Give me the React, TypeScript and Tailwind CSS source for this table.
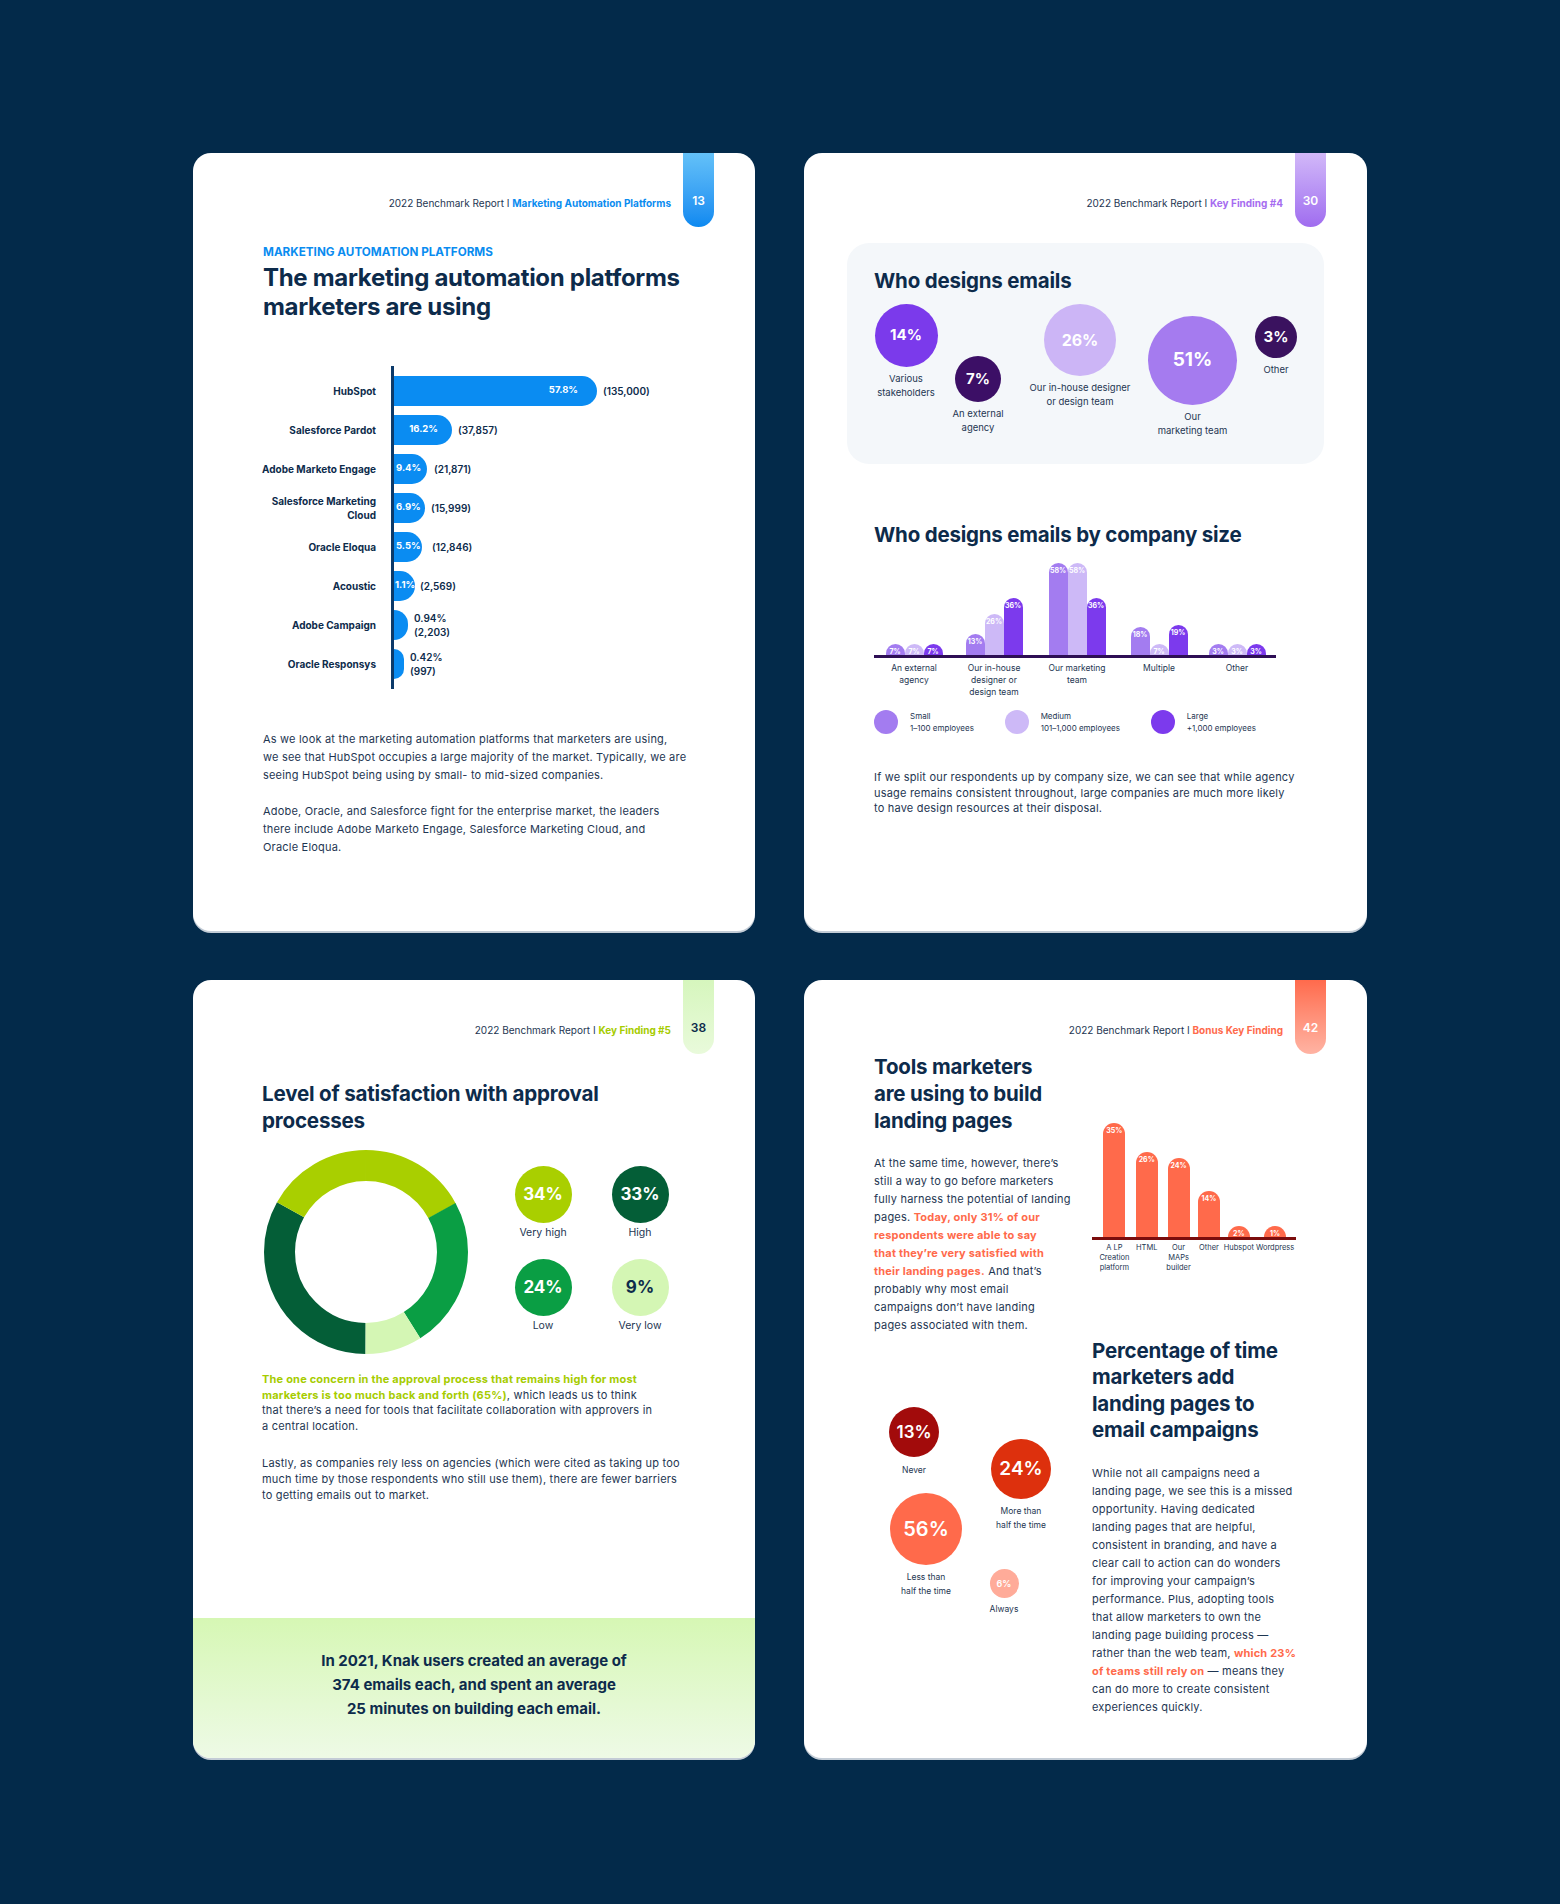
import React from 'react'

type HeaderProps = { section: string; sectionClass: string; num: string; tabClass: string }

function PageHeader({ section, sectionClass, num, tabClass }: HeaderProps) {
  return (
    <div className="flex justify-end pr-[41px]">
      <div className="mt-[42px] mr-[12px] whitespace-nowrap text-[10px] leading-[16px] text-[#1e3652]">
        2022 Benchmark Report I <span className={`font-bold ${sectionClass}`}>{section}</span>
      </div>
      <div
        className={`flex h-[74px] w-[31px] justify-center rounded-b-full pt-[40px] text-[12px] font-semibold leading-[16px] ${tabClass}`}
      >
        {num}
      </div>
    </div>
  )
}

const cardClass = 'flex h-[778px] flex-col overflow-hidden rounded-[18px] bg-white shadow-[0_2px_0_0_#c3ccd6]'

// card 1 data
const platforms = [
  { label: ['HubSpot'], w: 203, pct: '57.8%', val: ['(135,000)'], inner: 'justify-end pr-[19px]', gap: 'ml-[6px]' },
  { label: ['Salesforce Pardot'], w: 58, pct: '16.2%', val: ['(37,857)'], inner: 'justify-end pr-[14px]', gap: 'ml-[6px]' },
  { label: ['Adobe Marketo Engage'], w: 33, pct: '9.4%', val: ['(21,871)'], inner: 'justify-start pl-[2px]', gap: 'ml-[7px]' },
  { label: ['Salesforce Marketing', 'Cloud'], w: 31, pct: '6.9%', val: ['(15,999)'], inner: 'justify-start pl-[2px]', gap: 'ml-[6px]' },
  { label: ['Oracle Eloqua'], w: 28, pct: '5.5%', val: ['(12,846)'], inner: 'justify-start pl-[2px]', gap: 'ml-[10px]' },
  { label: ['Acoustic'], w: 21, pct: '1.1%', val: ['(2,569)'], inner: 'justify-start pl-[1px]', gap: 'ml-[5px]' },
  { label: ['Adobe Campaign'], w: 14, pct: '', val: ['0.94%', '(2,203)'], inner: '', gap: 'ml-[6px]' },
  { label: ['Oracle Responsys'], w: 10, pct: '', val: ['0.42%', '(997)'], inner: '', gap: 'ml-[6px]' },
]

function PlatformsCard() {
  return (
    <div className={cardClass}>
      <PageHeader
        section="Marketing Automation Platforms"
        sectionClass="text-[#0a8cf0]"
        num="13"
        tabClass="bg-linear-to-b from-[#63c1f8] to-[#0a89f0] text-white"
      />
      <div className="px-[70px]">
        <div className="mt-[17px] text-[11.7px] font-bold leading-[16px] text-[#0a8cf0]">MARKETING AUTOMATION PLATFORMS</div>
        <h2 className="mt-[4px] text-[24px] font-bold leading-[28.5px] tracking-[-0.3px] text-[#0d2b4b]">
          The marketing automation platforms
          <br />
          marketers are using
        </h2>
        <div className="mt-[45px] flex">
          <div className="w-[113px] pt-[5px] pb-[6px]">
            {platforms.map((p) => (
              <div
                key={p.label[0]}
                className="flex h-[39px] flex-col items-end justify-center text-right text-[10px] font-bold leading-[14px] text-[#0d2b4b]"
              >
                {p.label.map((l) => (
                  <span key={l} className="whitespace-nowrap">
                    {l}
                  </span>
                ))}
              </div>
            ))}
          </div>
          <div className="ml-[15px] border-l-[3.5px] border-[#0c3a6a] pt-[5px] pb-[6px]">
            {platforms.map((p) => (
              <div key={p.label[0]} className="flex h-[39px] items-center">
                <div
                  className={`flex h-[30px] items-center whitespace-nowrap rounded-r-full bg-[#0a8cf2] text-[9.5px] font-bold text-white ${p.inner}`}
                  style={{ width: p.w }}
                >
                  {p.pct}
                </div>
                <div className={`flex flex-col text-[10px] font-semibold leading-[14px] text-[#0d2b4b] ${p.gap}`}>
                  {p.val.map((v) => (
                    <span key={v}>{v}</span>
                  ))}
                </div>
              </div>
            ))}
          </div>
        </div>
        <div className="mt-[41px] whitespace-nowrap text-[11px] leading-[18px] tracking-[0.2px] text-[#1e3652]">
          <p>
            As we look at the marketing automation platforms that marketers are using,
            <br />
            we see that HubSpot occupies a large majority of the market. Typically, we are
            <br />
            seeing HubSpot being using by small- to mid-sized companies.
          </p>
          <p className="mt-[18px]">
            Adobe, Oracle, and Salesforce fight for the enterprise market, the leaders
            <br />
            there include Adobe Marketo Engage, Salesforce Marketing Cloud, and
            <br />
            Oracle Eloqua.
          </p>
        </div>
      </div>
    </div>
  )
}

// card 2 data
const bubbles = [
  { pct: '14%', size: 'h-[63px] w-[63px] text-[15px]', color: 'bg-[#7b3aeb]', col: 'w-[64px] ml-0 mt-0', label: ['Various', 'stakeholders'] },
  { pct: '7%', size: 'h-[46px] w-[46px] text-[15px]', color: 'bg-[#3c0f66]', col: 'w-[60px] ml-[10px] mt-[52px]', label: ['An external', 'agency'] },
  { pct: '26%', size: 'h-[72px] w-[72px] text-[16px]', color: 'bg-[#ccb5f6]', col: 'w-[104px] ml-[20px] mt-0', label: ['Our in-house designer', 'or design team'] },
  { pct: '51%', size: 'h-[89px] w-[89px] text-[19px]', color: 'bg-[#a57bef]', col: 'w-[89px] ml-[16px] mt-[12px]', label: ['Our', 'marketing team'] },
  { pct: '3%', size: 'h-[42px] w-[42px] text-[15px]', color: 'bg-[#3a125f]', col: 'w-[42px] ml-[18px] mt-[12px]', label: ['Other'] },
]

const sizeColors = ['bg-[#a37cf0]', 'bg-[#cdb9f7]', 'bg-[#7c3aed]']

const sizeGroups = [
  { label: ['An external', 'agency'], w: 'w-[80px]', vals: [7, 7, 7] },
  { label: ['Our in-house', 'designer or', 'design team'], w: 'w-[80px]', vals: [13, 26, 36] },
  { label: ['Our marketing', 'team'], w: 'w-[86px]', vals: [58, 58, 36] },
  { label: ['Multiple'], w: 'w-[78px]', vals: [18, 7, 19] },
  { label: ['Other'], w: 'w-[78px]', vals: [3, 3, 3] },
]

const legend = [
  { color: 'bg-[#a37cf0]', name: 'Small', range: '1–100 employees', w: 'w-[143px]' },
  { color: 'bg-[#cdb9f7]', name: 'Medium', range: '101–1,000 employees', w: 'w-[160px]' },
  { color: 'bg-[#7c3aed]', name: 'Large', range: '+1,000 employees', w: 'w-[160px]' },
]

function DesignersCard() {
  return (
    <div className={cardClass}>
      <PageHeader
        section="Key Finding #4"
        sectionClass="text-[#a66cf0]"
        num="30"
        tabClass="bg-linear-to-b from-[#d2b8f8] to-[#a06cef] text-white"
      />
      <div className="mx-[43px] mt-[16px] h-[221px] rounded-[22px] bg-[#f4f7fa] pl-[27px] pt-[26px]">
        <h2 className="text-[20.5px] font-bold leading-[24px] tracking-[-0.2px] text-[#0d2b4b]">Who designs emails</h2>
        <div className="mt-[11px] flex items-start">
          {bubbles.map((b) => (
            <div key={b.pct} className={`flex flex-col items-center ${b.col}`}>
              <div className={`flex items-center justify-center rounded-full font-bold text-white ${b.size} ${b.color}`}>
                {b.pct}
              </div>
              <div className="mt-[5px] text-center text-[9.5px] leading-[14px] whitespace-nowrap text-[#1e3652]">
                {b.label.map((l) => (
                  <div key={l}>{l}</div>
                ))}
              </div>
            </div>
          ))}
        </div>
      </div>
      <div className="px-[70px]">
        <h2 className="mt-[59px] text-[20.5px] font-bold leading-[24px] tracking-[-0.2px] text-[#0d2b4b]">
          Who designs emails by company size
        </h2>
        <div className="mt-[16px] w-[402px]">
          <div className="flex h-[92px] items-end">
            {sizeGroups.map((g) => (
              <div key={g.label[0]} className={`flex items-end justify-center ${g.w}`}>
                {g.vals.map((v, i) => (
                  <div
                    key={i}
                    className={`flex w-[19px] justify-center rounded-t-full pt-[4px] text-[7px] font-bold leading-none text-white ${sizeColors[i]}`}
                    style={{ height: Math.max(11, v * 1.58) }}
                  >
                    {v}%
                  </div>
                ))}
              </div>
            ))}
          </div>
          <div className="h-[3px] bg-[#2e0f55]" />
          <div className="mt-[4px] flex h-[40px]">
            {sizeGroups.map((g) => (
              <div key={g.label[0]} className={`text-center text-[8.5px] leading-[12px] text-[#1e3652] ${g.w}`}>
                {g.label.map((l) => (
                  <div key={l}>{l}</div>
                ))}
              </div>
            ))}
          </div>
        </div>
        <div className="mt-[8px] flex">
          {legend.map((l) => (
            <div key={l.name} className={`flex items-center ${l.w}`}>
              <div className={`h-[24px] w-[24px] rounded-full ${l.color}`} />
              <div className="ml-[12px] text-[8px] leading-[12px] text-[#1e3652]">
                <div>{l.name}</div>
                <div>{l.range}</div>
              </div>
            </div>
          ))}
        </div>
        <p className="mt-[36px] whitespace-nowrap text-[11px] leading-[15.5px] tracking-[0.2px] text-[#1e3652]">
          If we split our respondents up by company size, we can see that while agency
          <br />
          usage remains consistent throughout, large companies are much more likely
          <br />
          to have design resources at their disposal.
        </p>
      </div>
    </div>
  )
}

// card 3
const R = 86.5
const C = 2 * Math.PI * R
const donut = [
  { color: '#045e37', start: 180, len: 118.8 },
  { color: '#a9cf00', start: 298.8, len: 61.2 },
  { color: '#a9cf00', start: 0, len: 61.4 },
  { color: '#0a9e44', start: 61.2, len: 86.4 },
  { color: '#d4f6b4', start: 147.6, len: 32.4 },
]

const stats = [
  { pct: '34%', label: 'Very high', color: 'bg-[#a9cf00] text-white' },
  { pct: '33%', label: 'High', color: 'bg-[#045e37] text-white' },
  { pct: '24%', label: 'Low', color: 'bg-[#0a9e44] text-white' },
  { pct: '9%', label: 'Very low', color: 'bg-[#d4f6b4] text-[#0d2b4b]' },
]

function SatisfactionCard() {
  return (
    <div className={cardClass}>
      <PageHeader
        section="Key Finding #5"
        sectionClass="text-[#a6cc00]"
        num="38"
        tabClass="bg-linear-to-b from-[#d6f6bd] to-[#e9fadb] text-[#0d2b4b]"
      />
      <div className="px-[69px]">
        <h2 className="mt-[26px] text-[20.6px] font-bold leading-[27px] tracking-[-0.2px] text-[#0d2b4b]">
          Level of satisfaction with approval
          <br />
          processes
        </h2>
        <div className="mt-[16px] flex items-start">
          <svg width="204" height="204" viewBox="0 0 204 204" className="ml-[2px] shrink-0">
            {donut.map((s) => (
              <circle
                key={s.start}
                cx="102"
                cy="102"
                r={R}
                fill="none"
                stroke={s.color}
                strokeWidth="31"
                strokeDasharray={`${(s.len / 360) * C} ${C}`}
                strokeDashoffset={-(s.start / 360) * C}
                transform="rotate(-90 102 102)"
              />
            ))}
          </svg>
          <div className="ml-[35px] mt-[16px] grid grid-cols-[80px_80px] gap-x-[17px] gap-y-[19px]">
            {stats.map((s) => (
              <div key={s.label} className="flex flex-col items-center">
                <div className={`flex h-[57px] w-[57px] items-center justify-center rounded-full text-[17px] font-bold ${s.color}`}>
                  {s.pct}
                </div>
                <div className="mt-[3px] text-[10.5px] leading-[14px] text-[#1e3652]">{s.label}</div>
              </div>
            ))}
          </div>
        </div>
        <div className="mt-[18px] whitespace-nowrap text-[11px] leading-[15.6px] tracking-[0.2px] text-[#1e3652]">
          <p>
            <span className="font-bold text-[#a6cc00]">
              The one concern in the approval process that remains high for most
              <br />
              marketers is too much back and forth (65%)
            </span>
            , which leads us to think
            <br />
            that there’s a need for tools that facilitate collaboration with approvers in
            <br />a central location.
          </p>
          <p className="mt-[22px]">
            Lastly, as companies rely less on agencies (which were cited as taking up too
            <br />
            much time by those respondents who still use them), there are fewer barriers
            <br />
            to getting emails out to market.
          </p>
        </div>
      </div>
      <div className="mt-auto h-[140px] bg-linear-to-b from-[#d6f7b4] to-[#eefae6] pt-[31px] text-center text-[15px] font-bold leading-[24.2px] text-[#0d2b4b]">
        In 2021, Knak users created an average of
        <br />
        374 emails each, and spent an average
        <br />
        25 minutes on building each email.
      </div>
    </div>
  )
}

// card 4
const tools = [
  { label: ['A LP', 'Creation', 'platform'], pct: 35, h: 114, w: 'w-[33px]' },
  { label: ['HTML'], pct: 26, h: 85, w: 'w-[32px]' },
  { label: ['Our', 'MAPs', 'builder'], pct: 24, h: 79, w: 'w-[32px]' },
  { label: ['Other'], pct: 14, h: 46, w: 'w-[29px]' },
  { label: ['Hubspot'], pct: 2, h: 11, w: 'w-[31px]' },
  { label: ['Wordpress'], pct: 1, h: 11, w: 'w-[42px]' },
]

const timeBubbles = [
  { pct: '13%', label: ['Never'], pos: 'left-[0px] top-[73px] w-[80px]', size: 'h-[50px] w-[50px] text-[17px]', color: 'bg-[#a20b0b]', gap: 'mt-[7px]' },
  { pct: '24%', label: ['More than', 'half the time'], pos: 'left-[102px] top-[105px] w-[90px]', size: 'h-[60px] w-[60px] text-[19px]', color: 'bg-[#dd300d]', gap: 'mt-[6px]' },
  { pct: '56%', label: ['Less than', 'half the time'], pos: 'left-[7px] top-[159px] w-[90px]', size: 'h-[72px] w-[72px] text-[20px]', color: 'bg-[#ff6a4b]', gap: 'mt-[6px]' },
  { pct: '6%', label: ['Always'], pos: 'left-[100px] top-[235px] w-[60px]', size: 'h-[29px] w-[29px] text-[9px]', color: 'bg-[#ffab99]', gap: 'mt-[5px]' },
]

function LandingCard() {
  return (
    <div className={cardClass}>
      <PageHeader
        section="Bonus Key Finding"
        sectionClass="text-[#ff6a4b]"
        num="42"
        tabClass="bg-linear-to-b from-[#ff6a4c] to-[#ffb3a3] text-white"
      />
      <div className="grid grid-cols-[218px_1fr] pl-[70px]">
        <div>
          <h2 className="text-[20.5px] font-bold leading-[26.8px] tracking-[-0.2px] text-[#0d2b4b]">
            Tools marketers
            <br />
            are using to build
            <br />
            landing pages
          </h2>
          <p className="mt-[20px] whitespace-nowrap text-[11px] leading-[18px] tracking-[0.2px] text-[#1e3652]">
            At the same time, however, there’s
            <br />
            still a way to go before marketers
            <br />
            fully harness the potential of landing
            <br />
            pages.{' '}
            <span className="font-bold text-[#ff6a4b]">
              Today, only 31% of our
              <br />
              respondents were able to say
              <br />
              that they’re very satisfied with
              <br />
              their landing pages.
            </span>{' '}
            And that’s
            <br />
            probably why most email
            <br />
            campaigns don’t have landing
            <br />
            pages associated with them.
          </p>
          <div className="relative h-[300px]">
            {timeBubbles.map((b) => (
              <div key={b.pct} className={`absolute flex flex-col items-center ${b.pos}`}>
                <div className={`flex items-center justify-center rounded-full font-semibold text-white ${b.size} ${b.color}`}>
                  {b.pct}
                </div>
                <div className={`text-center text-[8.5px] leading-[13.5px] whitespace-nowrap text-[#1e3652] ${b.gap}`}>
                  {b.label.map((l) => (
                    <div key={l}>{l}</div>
                  ))}
                </div>
              </div>
            ))}
          </div>
        </div>
        <div>
          <div className="mt-[69px] w-[204px]">
            <div className="flex h-[114px] items-end pl-[6px]">
              {tools.map((t) => (
                <div key={t.label[0]} className={`flex justify-center ${t.w}`}>
                  <div
                    className="flex w-[22px] justify-center rounded-t-full bg-[#ff6a4b] pt-[4px] text-[7px] font-bold leading-none text-white"
                    style={{ height: t.h }}
                  >
                    {t.pct}%
                  </div>
                </div>
              ))}
            </div>
            <div className="h-[2.5px] bg-[#7b0d0d]" />
            <div className="mt-[3px] flex h-[32px] pl-[6px]">
              {tools.map((t) => (
                <div key={t.label[0]} className={`text-center text-[7.5px] leading-[10.3px] whitespace-nowrap text-[#1e3652] ${t.w}`}>
                  {t.label.map((l) => (
                    <div key={l}>{l}</div>
                  ))}
                </div>
              ))}
            </div>
          </div>
          <h2 className="mt-[63px] text-[20.5px] font-bold leading-[26.5px] tracking-[-0.2px] text-[#0d2b4b]">
            Percentage of time
            <br />
            marketers add
            <br />
            landing pages to
            <br />
            email campaigns
          </h2>
          <p className="mt-[20px] whitespace-nowrap text-[11px] leading-[18px] tracking-[0.2px] text-[#1e3652]">
            While not all campaigns need a
            <br />
            landing page, we see this is a missed
            <br />
            opportunity. Having dedicated
            <br />
            landing pages that are helpful,
            <br />
            consistent in branding, and have a
            <br />
            clear call to action can do wonders
            <br />
            for improving your campaign’s
            <br />
            performance. Plus, adopting tools
            <br />
            that allow marketers to own the
            <br />
            landing page building process —
            <br />
            rather than the web team, <span className="font-bold text-[#ff6a4b]">which 23%</span>
            <br />
            <span className="font-bold text-[#ff6a4b]">of teams still rely on</span> — means they
            <br />
            can do more to create consistent
            <br />
            experiences quickly.
          </p>
        </div>
      </div>
    </div>
  )
}

export default function App() {
  return (
    <div className="min-h-[1904px] w-full bg-[#032a4a] px-[193px] pt-[153px] pb-[146px] font-['Inter',sans-serif]">
      <div className="grid grid-cols-[562px_563px] gap-x-[49px] gap-y-[49px]">
        <PlatformsCard />
        <DesignersCard />
        <SatisfactionCard />
        <LandingCard />
      </div>
    </div>
  )
}
